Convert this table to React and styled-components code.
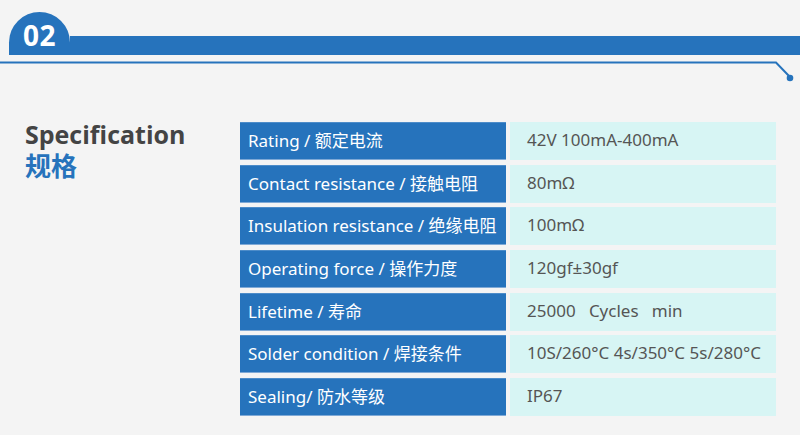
import React from 'react'
import styled, { createGlobalStyle } from 'styled-components'

const Global = createGlobalStyle`
  html, body {
    margin: 0;
    padding: 0;
    background: #f4f4f4;
  }
  body {
    width: 800px;
    height: 435px;
    overflow: hidden;
    font-family: "Noto Sans", "Noto Sans CJK SC", sans-serif;
  }
`

const BLUE = '#2673bc'

const Header = styled.div`
  display: flex;
  align-items: flex-end;
  padding-top: 12px;
`

const Tab = styled.div`
  width: 61px;
  height: 43px;
  margin-left: 9px;
  border-radius: 31px 31px 0 0;
  background: ${BLUE};
  color: #fff;
  font-family: "Open Sans", sans-serif;
  font-weight: 700;
  font-size: 28px;
  line-height: 1;
  display: flex;
  align-items: center;
  justify-content: center;
  padding-top: 3px;
  box-sizing: border-box;
  letter-spacing: 0.5px;
`

const Bar = styled.div`
  flex: 1;
  height: 19px;
  background: ${BLUE};
`

const Rule = styled.svg`
  display: block;
  margin-top: 6px;
`

const Main = styled.div`
  display: flex;
  margin-top: 35px;
`

const Title = styled.div`
  width: 215px;
  padding-left: 25px;
  font-weight: 700;
  font-size: 25px;
`

const TitleEn = styled.div`
  font-family: "Open Sans", sans-serif;
  color: #444;
  line-height: 31px;
  padding-top: 1px;
`

const TitleCn = styled.div`
  font-family: "Noto Sans CJK SC", sans-serif;
  color: ${BLUE};
  font-size: 26px;
  line-height: 30px;
`

const Table = styled.div`
  margin-top: 4px;
  display: grid;
  grid-template-columns: 266px 266px;
  grid-auto-rows: 38px;
  column-gap: 4px;
  row-gap: 4.67px;
`

const Cell = styled.div`
  display: flex;
  align-items: center;
  font-size: 17px;
  white-space: pre;
  box-sizing: border-box;
  padding-bottom: 3px;
  ${p => p.$head ? `
    background: ${BLUE};
    color: #fff;
    padding-left: 8px;
    border-top: 1px solid #4d8cc9;
    border-bottom: 1px solid #7fa9d6;
  ` : `
    background: #d7f5f4;
    color: #555;
    padding-left: 17px;
  `}
`

const rows = [
  ['Rating / 额定电流', '42V 100mA-400mA'],
  ['Contact resistance / 接触电阻', '80mΩ'],
  ['Insulation resistance / 绝缘电阻', '100mΩ'],
  ['Operating force / 操作力度', '120gf±30gf'],
  ['Lifetime / 寿命', '25000   Cycles   min'],
  ['Solder condition / 焊接条件', '10S/260°C 4s/350°C 5s/280°C'],
  ['Sealing/ 防水等级', 'IP67'],
]

export default function App() {
  return (
    <>
      <Global />
      <Header>
        <Tab>02</Tab>
        <Bar />
      </Header>
      <Rule width="800" height="22" viewBox="0 0 800 22">
        <polyline points="0,1.5 776,1.5 789,15" fill="none" stroke={BLUE} strokeWidth="2" />
        <circle cx="790" cy="17" r="3.3" fill={BLUE} />
      </Rule>
      <Main>
        <Title>
          <TitleEn>Specification</TitleEn>
          <TitleCn>规格</TitleCn>
        </Title>
        <Table>
          {rows.map(([k, v]) => (
            <React.Fragment key={k}>
              <Cell $head>{k}</Cell>
              <Cell>{v}</Cell>
            </React.Fragment>
          ))}
        </Table>
      </Main>
    </>
  )
}
